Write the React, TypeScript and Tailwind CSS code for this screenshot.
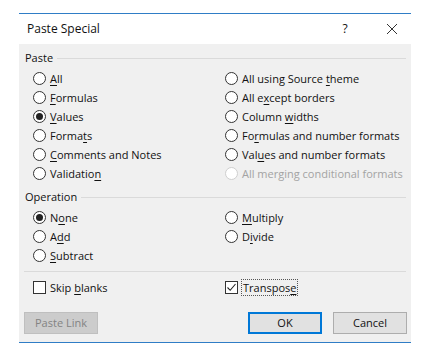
import React from 'react';

type Opt = { pre: string; key: string; post: string; checked?: boolean; disabled?: boolean };

function Label({ o }: { o: Opt }) {
  return (
    <span className={o.disabled ? 'text-[#a3a3a3]' : 'text-[#111111]'}>
      {o.pre}
      {o.key && <span className="underline underline-offset-[2px]">{o.key}</span>}
      {o.post}
    </span>
  );
}

function Radio({ o }: { o: Opt }) {
  return (
    <div className="flex items-center h-[19px] gap-[4px]">
      <span
        className={`w-[13px] h-[13px] rounded-full border flex items-center justify-center bg-white shrink-0 ${
          o.disabled ? 'border-[#cfcfcf] bg-[#f4f4f4]' : 'border-[#333333]'
        }`}
      >
        {o.checked && <span className="w-[7px] h-[7px] rounded-full bg-[#222222]" />}
      </span>
      <Label o={o} />
    </div>
  );
}

function Check({ o, focus }: { o: Opt; focus?: boolean }) {
  return (
    <div className="flex items-center h-[19px] gap-[4px]">
      <span className="w-[13px] h-[13px] border border-[#333333] bg-white flex items-center justify-center shrink-0">
        {o.checked && (
          <svg width="11" height="11" viewBox="0 0 11 11">
            <path d="M1.5 5.5 L4.2 8.3 L9.5 2" fill="none" stroke="#222" strokeWidth="1.1" />
          </svg>
        )}
      </span>
      <span className={focus ? 'outline outline-1 outline-dotted outline-[#555] px-[1px] leading-[15px]' : ''}>
        <Label o={o} />
      </span>
    </div>
  );
}

function Section({ title }: { title: string }) {
  return (
    <div className="flex items-center h-[16px] gap-[4px] pr-[3px]">
      <span className="text-[#111111]">{title}</span>
      <span className="flex-1 h-px bg-[#dadada]" />
    </div>
  );
}

const pasteLeft: Opt[] = [
  { pre: '', key: 'A', post: 'll' },
  { pre: '', key: 'F', post: 'ormulas' },
  { pre: '', key: 'V', post: 'alues', checked: true },
  { pre: 'Forma', key: 't', post: 's' },
  { pre: '', key: 'C', post: 'omments and Notes' },
  { pre: 'Validatio', key: 'n', post: '' },
];
const pasteRight: Opt[] = [
  { pre: 'All using Source ', key: 't', post: 'heme' },
  { pre: 'All e', key: 'x', post: 'cept borders' },
  { pre: 'Column ', key: 'w', post: 'idths' },
  { pre: 'Fo', key: 'r', post: 'mulas and number formats' },
  { pre: 'Val', key: 'u', post: 'es and number formats' },
  { pre: 'All merging conditional formats', key: '', post: '', disabled: true },
];
const opLeft: Opt[] = [
  { pre: 'N', key: 'o', post: 'ne', checked: true },
  { pre: 'A', key: 'd', post: 'd' },
  { pre: '', key: 'S', post: 'ubtract' },
];
const opRight: Opt[] = [
  { pre: '', key: 'M', post: 'ultiply' },
  { pre: 'D', key: 'i', post: 'vide' },
];

export default function App() {
  return (
    <div className="w-[424px] h-[359px] bg-white pt-[13px] pl-[19px] font-['Open_Sans',sans-serif] text-[11px] leading-[16px]">
      <div className="w-[392px] flex flex-col">
        <div className="h-px bg-[#2f7dc6]" />
        <div className="h-[30px] bg-white flex items-center pl-[8px] text-[12px] text-[#111111]">
          <span className="flex-1">Paste Special</span>
          <span className="w-[20px] text-center mr-[31px] text-[12px]">?</span>
          <svg width="12" height="12" viewBox="0 0 12 12" className="mr-[13px]">
            <path d="M1 1 L11 11 M11 1 L1 11" stroke="#333" strokeWidth="1" />
          </svg>
        </div>
        <div className="bg-[#f0f0f0] h-[298px] pl-[6px] pr-[2px] pt-[6px] flex flex-col">
          <Section title="Paste" />
          <div className="grid grid-cols-[192px_1fr] pl-[8px] mt-[3px]">
            <div className="flex flex-col">
              {pasteLeft.map((o) => <Radio key={o.pre + o.key + o.post} o={o} />)}
            </div>
            <div className="flex flex-col">
              {pasteRight.map((o) => <Radio key={o.pre + o.key + o.post} o={o} />)}
            </div>
          </div>
          <div className="mt-[6px]">
            <Section title="Operation" />
          </div>
          <div className="grid grid-cols-[192px_1fr] pl-[8px] mt-[3px]">
            <div className="flex flex-col">
              {opLeft.map((o) => <Radio key={o.pre + o.key + o.post} o={o} />)}
            </div>
            <div className="flex flex-col">
              {opRight.map((o) => <Radio key={o.pre + o.key + o.post} o={o} />)}
            </div>
          </div>
          <div className="h-px bg-[#dadada] mt-[6px] mr-[3px] ml-[-1px]" />
          <div className="grid grid-cols-[192px_1fr] pl-[8px] mt-[6px]">
            <Check o={{ pre: 'Skip ', key: 'b', post: 'lanks' }} />
            <Check o={{ pre: 'Transpos', key: 'e', post: '', checked: true }} focus />
          </div>
          <div className="flex items-center mt-[15px]">
            <button className="w-[74px] h-[22px] ml-[-1px] border border-[#bfbfbf] bg-[#cccccc] text-[#838383]">
              Paste Link
            </button>
            <span className="flex-1" />
            <button className="w-[74px] h-[22px] border-2 border-[#0078d7] bg-[#e1e1e1] text-[#111111]">
              OK
            </button>
            <button className="w-[74px] h-[22px] ml-[11px] mr-[2px] border border-[#adadad] bg-[#e1e1e1] text-[#111111]">
              Cancel
            </button>
          </div>
        </div>
        <div className="h-px bg-[#2f7dc6]" />
      </div>
    </div>
  );
}
